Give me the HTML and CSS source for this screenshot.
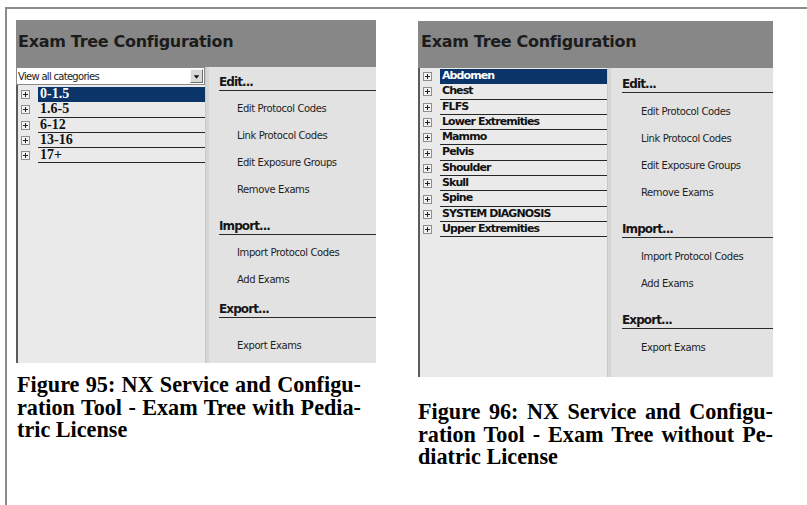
FILE: index.html
```html
<!DOCTYPE html>
<html lang="en">
<head>
    <meta charset="UTF-8">
    <title>Exam Tree Configuration</title>
    <link rel="stylesheet" href="styles.css">
</head>
<body>
<div class="page">
    <div class="cell cell-a">
        <div class="shot shot-a">
            <div class="shot-head">Exam Tree Configuration</div>
            <div class="shot-body">
                <div class="tree-pane">
                    <div class="combo">
                        <span class="combo-text">View all categories</span>
                        <span class="combo-btn">
                            <svg width="12" height="13" viewBox="0 0 12 13"><path d="M3 5h6l-3 4z" fill="#111"/></svg>
                        </span>
                    </div>
                    <ul class="tree tree-serif">
                        <li class="sel"><svg class="plus" width="9" height="9" viewBox="0 0 9 9"><rect x="0.5" y="0.5" width="8" height="8" fill="#f3f3f3" stroke="#8e8e8e"/><path d="M2 4.5h5M4.5 2v5" stroke="#222"/></svg><span class="label">0-1.5</span></li>
                        <li><svg class="plus" width="9" height="9" viewBox="0 0 9 9"><rect x="0.5" y="0.5" width="8" height="8" fill="#f3f3f3" stroke="#8e8e8e"/><path d="M2 4.5h5M4.5 2v5" stroke="#222"/></svg><span class="label">1.6-5</span></li>
                        <li><svg class="plus" width="9" height="9" viewBox="0 0 9 9"><rect x="0.5" y="0.5" width="8" height="8" fill="#f3f3f3" stroke="#8e8e8e"/><path d="M2 4.5h5M4.5 2v5" stroke="#222"/></svg><span class="label">6-12</span></li>
                        <li><svg class="plus" width="9" height="9" viewBox="0 0 9 9"><rect x="0.5" y="0.5" width="8" height="8" fill="#f3f3f3" stroke="#8e8e8e"/><path d="M2 4.5h5M4.5 2v5" stroke="#222"/></svg><span class="label">13-16</span></li>
                        <li><svg class="plus" width="9" height="9" viewBox="0 0 9 9"><rect x="0.5" y="0.5" width="8" height="8" fill="#f3f3f3" stroke="#8e8e8e"/><path d="M2 4.5h5M4.5 2v5" stroke="#222"/></svg><span class="label">17+</span></li>
                    </ul>
                </div>
                <div class="actions">
                    <div class="group">
                        <h3>Edit...</h3>
                        <ul>
                            <li>Edit Protocol Codes</li>
                            <li>Link Protocol Codes</li>
                            <li>Edit Exposure Groups</li>
                            <li>Remove Exams</li>
                        </ul>
                    </div>
                    <div class="group">
                        <h3>Import...</h3>
                        <ul>
                            <li>Import Protocol Codes</li>
                            <li>Add Exams</li>
                        </ul>
                    </div>
                    <div class="group group-export">
                        <h3>Export...</h3>
                        <ul>
                            <li>Export Exams</li>
                        </ul>
                    </div>
                </div>
            </div>
        </div>
        <p class="caption">
            <span>Figure 95: NX Service and Configu-</span>
            <span>ration Tool - Exam Tree with Pedia-</span>
            <span class="last">tric License</span>
        </p>
    </div>

    <div class="cell cell-b">
        <div class="shot shot-b">
            <div class="shot-head">Exam Tree Configuration</div>
            <div class="shot-body">
                <div class="tree-pane">
                    <ul class="tree tree-sans">
                        <li class="sel"><svg class="plus" width="9" height="9" viewBox="0 0 9 9"><rect x="0.5" y="0.5" width="8" height="8" fill="#f3f3f3" stroke="#8e8e8e"/><path d="M2 4.5h5M4.5 2v5" stroke="#222"/></svg><span class="label">Abdomen</span></li>
                        <li><svg class="plus" width="9" height="9" viewBox="0 0 9 9"><rect x="0.5" y="0.5" width="8" height="8" fill="#f3f3f3" stroke="#8e8e8e"/><path d="M2 4.5h5M4.5 2v5" stroke="#222"/></svg><span class="label">Chest</span></li>
                        <li><svg class="plus" width="9" height="9" viewBox="0 0 9 9"><rect x="0.5" y="0.5" width="8" height="8" fill="#f3f3f3" stroke="#8e8e8e"/><path d="M2 4.5h5M4.5 2v5" stroke="#222"/></svg><span class="label">FLFS</span></li>
                        <li><svg class="plus" width="9" height="9" viewBox="0 0 9 9"><rect x="0.5" y="0.5" width="8" height="8" fill="#f3f3f3" stroke="#8e8e8e"/><path d="M2 4.5h5M4.5 2v5" stroke="#222"/></svg><span class="label">Lower Extremities</span></li>
                        <li><svg class="plus" width="9" height="9" viewBox="0 0 9 9"><rect x="0.5" y="0.5" width="8" height="8" fill="#f3f3f3" stroke="#8e8e8e"/><path d="M2 4.5h5M4.5 2v5" stroke="#222"/></svg><span class="label">Mammo</span></li>
                        <li><svg class="plus" width="9" height="9" viewBox="0 0 9 9"><rect x="0.5" y="0.5" width="8" height="8" fill="#f3f3f3" stroke="#8e8e8e"/><path d="M2 4.5h5M4.5 2v5" stroke="#222"/></svg><span class="label">Pelvis</span></li>
                        <li><svg class="plus" width="9" height="9" viewBox="0 0 9 9"><rect x="0.5" y="0.5" width="8" height="8" fill="#f3f3f3" stroke="#8e8e8e"/><path d="M2 4.5h5M4.5 2v5" stroke="#222"/></svg><span class="label">Shoulder</span></li>
                        <li><svg class="plus" width="9" height="9" viewBox="0 0 9 9"><rect x="0.5" y="0.5" width="8" height="8" fill="#f3f3f3" stroke="#8e8e8e"/><path d="M2 4.5h5M4.5 2v5" stroke="#222"/></svg><span class="label">Skull</span></li>
                        <li><svg class="plus" width="9" height="9" viewBox="0 0 9 9"><rect x="0.5" y="0.5" width="8" height="8" fill="#f3f3f3" stroke="#8e8e8e"/><path d="M2 4.5h5M4.5 2v5" stroke="#222"/></svg><span class="label">Spine</span></li>
                        <li><svg class="plus" width="9" height="9" viewBox="0 0 9 9"><rect x="0.5" y="0.5" width="8" height="8" fill="#f3f3f3" stroke="#8e8e8e"/><path d="M2 4.5h5M4.5 2v5" stroke="#222"/></svg><span class="label">SYSTEM DIAGNOSIS</span></li>
                        <li><svg class="plus" width="9" height="9" viewBox="0 0 9 9"><rect x="0.5" y="0.5" width="8" height="8" fill="#f3f3f3" stroke="#8e8e8e"/><path d="M2 4.5h5M4.5 2v5" stroke="#222"/></svg><span class="label">Upper Extremities</span></li>
                    </ul>
                </div>
                <div class="actions">
                    <div class="group">
                        <h3>Edit...</h3>
                        <ul>
                            <li>Edit Protocol Codes</li>
                            <li>Link Protocol Codes</li>
                            <li>Edit Exposure Groups</li>
                            <li>Remove Exams</li>
                        </ul>
                    </div>
                    <div class="group">
                        <h3>Import...</h3>
                        <ul>
                            <li>Import Protocol Codes</li>
                            <li>Add Exams</li>
                        </ul>
                    </div>
                    <div class="group group-export">
                        <h3>Export...</h3>
                        <ul>
                            <li>Export Exams</li>
                        </ul>
                    </div>
                </div>
            </div>
        </div>
        <p class="caption">
            <span>Figure 96: NX Service and Configu-</span>
            <span>ration Tool - Exam Tree without Pe-</span>
            <span class="last">diatric License</span>
        </p>
    </div>
</div>
</body>
</html>
```

FILE: styles.css
```css
*{
    margin:0;
    padding:0;
    box-sizing:border-box;
}
ul{
    list-style:none;
}
body{
    background:#fff;
    font-family:"DejaVu Sans", sans-serif;
    color:#111;
}
/* outer frame of the document cell */
.page{
    display:flex;
    margin:7px 0 0 5px;
    height:498px;
    border-top:2px solid #8c8c8c;
    border-left:2px solid #8c8c8c;
}
.cell-a{
    width:393px;
    padding:11px 0 0 9px;
}
.cell-b{
    padding:12px 0 0 18px;
}

/* screenshot of the dialog */
.shot{
    display:flex;
    flex-direction:column;
}
.shot-a{
    width:360px;
    height:343px;
}
.shot-b{
    width:355px;
    height:356px;
}
.shot-head{
    height:47px;
    background:#878787;
    color:#1c1c1c;
    font-weight:bold;
    font-size:16px;
    line-height:20px;
    letter-spacing:-0.3px;
    padding:12px 0 0 2px;
}
.shot-b .shot-head{
    padding:11px 0 0 3px;
}
.shot-body{
    flex:1;
    display:flex;
}
.tree-pane{
    width:190px;
    display:flex;
    flex-direction:column;
    background:#eaeaea;
    border-right:1px solid #c9c9c9;
}
.combo{
    height:18px;
    display:flex;
    align-items:center;
    justify-content:space-between;
    background:#fff;
    border:1px solid #8a8a8a;
    padding:0 0 0 1px;
}
.combo-text{
    font-size:10px;
    letter-spacing:-0.7px;
    color:#222;
}
.combo-btn{
    width:13px;
    height:14px;
    margin-right:1px;
    display:flex;
    align-items:center;
    justify-content:center;
    background:#d9d9d9;
    border:1px solid;
    border-color:#f6f6f6 #6c6c6c #6c6c6c #f6f6f6;
}
.tree{
    flex:1;
    border-left:2px solid #5b5b5b;
    padding-top:2px;
}
.shot-b .tree{
    padding-top:1px;
}
.tree li{
    height:15.3px;
    display:flex;
    align-items:center;
}
.plus{
    flex:none;
    margin:0 8px 0 3px;
}
.label{
    flex:1;
    height:100%;
    border-bottom:1px solid #262626;
    padding-left:2px;
    font-weight:bold;
    color:#111;
}
.tree-serif .label{
    font-family:"Liberation Serif", serif;
    font-size:14px;
    line-height:14px;
}
.tree-sans .label{
    font-size:11px;
    line-height:14px;
    letter-spacing:-0.9px;
}
.tree li.sel .label{
    background:#0b3468;
    border-bottom-color:#0b3468;
    color:#fff;
}

/* action list on the right */
.actions{
    flex:1;
    background:#e2e2e2;
    border-left:3px solid #d6d6d6;
}
.group h3{
    height:24px;
    margin-left:10px;
    padding-top:8px;
    font-size:12px;
    line-height:14px;
    letter-spacing:-0.9px;
    color:#151515;
    border-bottom:1px solid #2a2a2a;
}
.group ul{
    padding:4px 0 0 28px;
}
.group li{
    height:27px;
    line-height:27px;
    font-size:10px;
    letter-spacing:-0.4px;
    color:#1e1e1e;
}
.group + .group{
    margin-top:8px;
}
.shot-a .group-export{
    margin-top:1px;
}
.shot-a .group-export ul{
    padding-top:14px;
}
.shot-b .group h3{
    height:25px;
    padding-top:9px;
    margin-left:11px;
}
.shot-b .group ul{
    padding:5px 0 0 30px;
}
.shot-b .group + .group{
    margin-top:7px;
}

/* figure captions, justified like the printed manual */
.caption{
    font-family:"Liberation Serif", serif;
    font-weight:bold;
    font-size:22.2px;
    line-height:22.5px;
    color:#000;
}
.caption span{
    display:block;
    white-space:nowrap;
    text-align:justify;
    text-align-last:justify;
}
.caption span.last{
    text-align-last:left;
}
.cell-a .caption{
    width:344px;
    margin:11px 0 0 1px;
}
.cell-b .caption{
    width:355px;
    margin-top:24px;
}
```
